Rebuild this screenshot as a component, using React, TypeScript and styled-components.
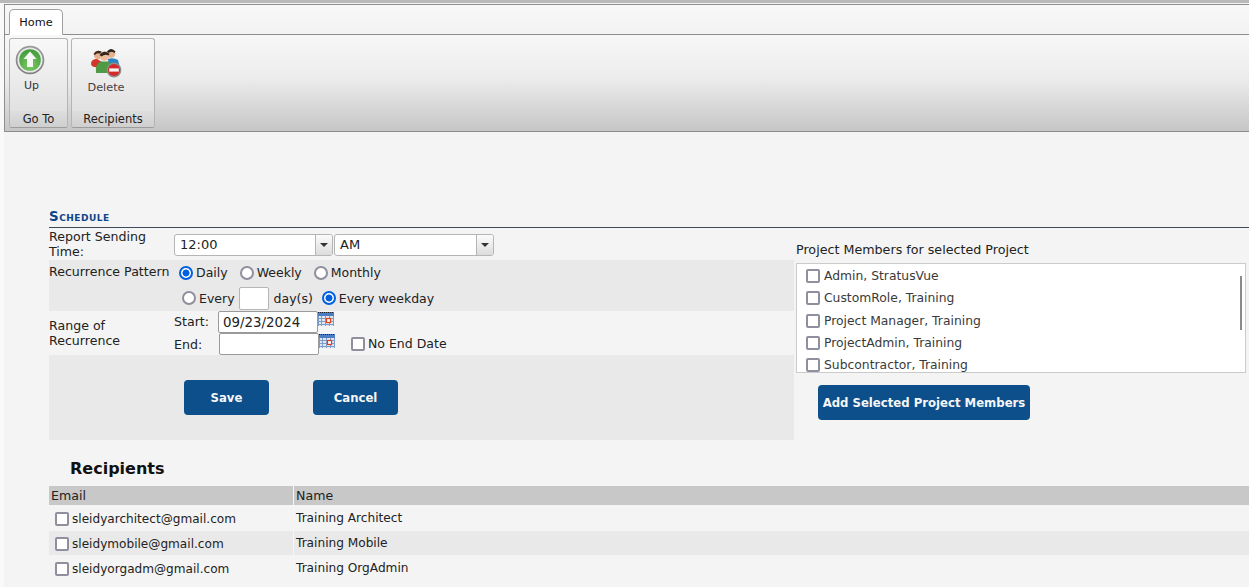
import React from "react";
import styled, { createGlobalStyle } from "styled-components";

const Global = createGlobalStyle`
  html, body { margin: 0; padding: 0; background: #f4f4f4; }
  body { font-family: "DejaVu Sans", Verdana, sans-serif; font-size: 12.6px; color: #222; overflow: hidden; }
`;

const Page = styled.div`
  width: 1249px;
  height: 587px;
  overflow: hidden;
  border-top: 3px solid #b9b9b9;
  box-sizing: border-box;
  padding-left: 4px;
  background: linear-gradient(to right, #f9f9f9 4px, #f4f4f4 4px);
`;

const Ribbon = styled.header`
  margin-top: 1px;
  border: 1px solid #8e8e8e;
  border-right: none;
  height: 128px;
  box-sizing: border-box;
  background: #fff;
`;

const TabStrip = styled.div`
  height: 30px;
  box-sizing: border-box;
  padding: 4px 0 0 4px;
  border-bottom: 1px solid #8e8e8e;
  background: linear-gradient(#f8f8f8, #f2f2f2);
  display: flex;
  align-items: flex-end;
`;

const Tab = styled.div`
  width: 54px;
  height: 26px;
  box-sizing: border-box;
  margin-bottom: -1px;
  padding-top: 1px;
  border: 1px solid #a0a0a0;
  border-bottom: 1px solid #fff;
  border-radius: 5px 5px 0 0;
  background: #fff;
  color: #111;
  font-size: 11.3px;
  display: flex;
  align-items: center;
  justify-content: center;
`;

const RibbonBody = styled.div`
  height: 96px;
  box-sizing: border-box;
  padding: 3px 0 0 4px;
  display: flex;
  gap: 3px;
  background: linear-gradient(#f7f7f7 0%, #ececec 45%, #c6c6c6 100%);
`;

const Group = styled.div<{ $w: number }>`
  width: ${(p) => p.$w}px;
  height: 90px;
  box-sizing: border-box;
  border: 1px solid #b4b4b4;
  border-bottom-color: #9c9c9c;
  border-radius: 3px;
  display: flex;
  flex-direction: column;
  background: linear-gradient(#f8f8f8, #dcdcdc);
`;

const GroupBody = styled.div`
  flex: 1;
`;

const GroupFooter = styled.div`
  height: 16px;
  background: linear-gradient(#dedede, #cfcfcf);
  color: #222;
  font-size: 11.5px;
  line-height: 16px;
  text-align: center;
  border-radius: 0 0 3px 3px;
`;

const ActionUp = styled.div`
  display: flex;
  flex-direction: column;
  align-items: flex-start;
  padding: 6px 0 0 5px;
  color: #333;
  font-size: 11px;
  svg { display: block; }
  span { margin: 4px 0 0 9px; }
`;

const ActionDelete = styled.div`
  display: flex;
  flex-direction: column;
  align-items: center;
  padding-top: 7px;
  color: #4a3f3f;
  font-size: 11.3px;
  width: 68px;
  svg { display: block; }
  span { margin-top: 3px; }
`;

const Content = styled.main`
  padding: 78px 0 0 45px;
`;

const SectionTitle = styled.h2`
  margin: 0;
  height: 17px;
  line-height: 14px;
  color: #0c4488;
  font-size: 13.4px;
  font-weight: bold;
  font-variant: small-caps;
  letter-spacing: 0.5px;
  border-bottom: 1px solid #3c4a5a;
`;

const Columns = styled.div`
  display: flex;
  align-items: flex-start;
`;

const FormPanel = styled.section`
  width: 745px;
  flex: none;
`;

const FormRow = styled.div<{ $h: number; $shade?: boolean }>`
  height: ${(p) => p.$h}px;
  box-sizing: border-box;
  display: flex;
  background: ${(p) => (p.$shade ? "#e9e9e9" : "transparent")};
`;

const RowLabel = styled.div<{ $top: number }>`
  width: 125px;
  flex: none;
  line-height: 15px;
  padding-top: ${(p) => p.$top}px;
  color: #222;
`;

const SelectBox = styled.div<{ $w: number }>`
  width: ${(p) => p.$w}px;
  height: 22px;
  box-sizing: border-box;
  border: 1px solid #b5b5b5;
  border-radius: 3px;
  background: #fff;
  display: flex;
  align-items: stretch;
  color: #222;
  font-size: 13px;
  line-height: 20px;
  overflow: hidden;
`;

const SelectText = styled.span`
  flex: 1;
  padding-left: 5px;
`;

const SelectArrow = styled.span`
  width: 16px;
  border-left: 1px solid #b5b5b5;
  background: linear-gradient(#fbfbfb, #dcdcdc);
  display: flex;
  align-items: center;
  justify-content: center;
  &::after {
    content: "";
    border-left: 4px solid transparent;
    border-right: 4px solid transparent;
    border-top: 4px solid #333;
  }
`;

const SelectsLine = styled.div`
  display: flex;
  gap: 1px;
  padding-top: 6px;
`;

const PatternStack = styled.div`
  display: flex;
  flex-direction: column;
`;

const OptionsLine = styled.div<{ $h: number; $left: number; $gap: number }>`
  height: ${(p) => p.$h}px;
  padding-left: ${(p) => p.$left}px;
  display: flex;
  align-items: center;
  gap: ${(p) => p.$gap}px;
`;

const Choice = styled.label`
  display: flex;
  align-items: center;
  gap: 3px;
  color: #222;
  font-size: 12.5px;
`;

const Radio = styled.input.attrs({ type: "radio" })`
  appearance: none;
  margin: 0;
  width: 14px;
  height: 14px;
  box-sizing: border-box;
  border-radius: 50%;
  border: 2px solid #8f8f9d;
  background: #fff;
  &:checked {
    border-color: #0060df;
    background: radial-gradient(circle, #0060df 0 3.2px, #fff 3.8px);
  }
`;

const Check = styled.input.attrs({ type: "checkbox" })`
  appearance: none;
  margin: 0;
  flex: none;
  width: 14px;
  height: 14px;
  box-sizing: border-box;
  border-radius: 2px;
  border: 2px solid #8f8f9d;
  background: #fff;
`;

const DaysInput = styled.input`
  width: 30px;
  height: 23px;
  box-sizing: border-box;
  margin: 0 5px 0 4px;
  border: 1px solid #b5b5b5;
  border-radius: 2px;
  background: #fff;
`;

const EveryGroup = styled.div`
  display: flex;
  align-items: center;
  color: #222;
  font-size: 12.5px;
`;

const DateStack = styled.div`
  display: flex;
  flex-direction: column;
`;

const DateLine = styled.div`
  height: 22px;
  display: flex;
  align-items: flex-start;
`;

const DateLabel = styled.span<{ $w: number; $top?: number }>`
  width: ${(p) => p.$w}px;
  line-height: 22px;
  padding-top: ${(p) => p.$top ?? 0}px;
  color: #222;
`;

const DateInput = styled.input`
  width: 100px;
  height: 22px;
  box-sizing: border-box;
  padding: 0 4px;
  border: 1px solid #9a9a9a;
  border-radius: 2px;
  background: #fff;
  font: 13.4px "DejaVu Sans", Verdana, sans-serif;
  color: #222;
`;

const NoEnd = styled.label`
  display: flex;
  align-items: center;
  gap: 3px;
  margin: 3px 0 0 16px;
  line-height: 16px;
  color: #222;
  font-size: 12.5px;
`;

const ButtonsRow = styled.div`
  display: flex;
  gap: 44px;
  padding: 25px 0 0 135px;
`;

const PrimaryButton = styled.button<{ $w: number }>`
  width: ${(p) => p.$w}px;
  height: 35px;
  padding: 0;
  border: none;
  border-radius: 4px;
  background: #0c4f8a;
  color: #f6f6f6;
  font: bold 11.7px "DejaVu Sans", Verdana, sans-serif;
  white-space: nowrap;
`;

const MembersPanel = styled.aside`
  margin-left: 2px;
  width: 450px;
  flex: none;
`;

const MembersTitle = styled.div`
  height: 35px;
  line-height: 44px;
  color: #222;
  font-size: 12.7px;
`;

const MembersList = styled.div`
  position: relative;
  height: 110px;
  box-sizing: border-box;
  border: 1px solid #cbcbcb;
  background: #fff;
  overflow: hidden;
  padding: 1px 0 0 9px;
`;

const MemberRow = styled.label`
  height: 22.3px;
  display: flex;
  align-items: center;
  gap: 4px;
  color: #3a3a3a;
  font-size: 12.35px;
`;

const ScrollThumb = styled.div`
  position: absolute;
  right: 3px;
  top: 12px;
  width: 2px;
  height: 54px;
  background: #8a8a8a;
`;

const AddButton = styled(PrimaryButton)`
  display: block;
  margin: 12px 0 0 22px;
`;

const RecipientsTitle = styled.h3`
  margin: 0;
  padding: 19px 0 0 21px;
  height: 46px;
  box-sizing: border-box;
  line-height: 20px;
  font-size: 16px;
  font-weight: bold;
  color: #111;
`;

const TableRow = styled.div<{ $h: number; $bg: string; $gap: number }>`
  height: ${(p) => p.$h}px;
  display: flex;
  background: ${(p) => p.$bg};
  margin-bottom: ${(p) => p.$gap}px;
`;

const EmailCell = styled.div<{ $head?: boolean }>`
  width: 245px;
  flex: none;
  box-sizing: border-box;
  display: flex;
  align-items: center;
  gap: 3px;
  padding: ${(p) => (p.$head ? "0 0 0 2px" : "2px 0 0 6px")};
  border-right: 1px solid #f6f6f6;
  color: #222;
  font-size: ${(p) => (p.$head ? "12.6px" : "12.1px")};
`;

const NameCell = styled.div<{ $head?: boolean }>`
  flex: 1;
  padding-left: 2px;
  display: flex;
  align-items: center;
  color: #222;
  font-size: ${(p) => (p.$head ? "12.6px" : "12.15px")};
`;

const UpIcon = () => (
  <svg width="30" height="30" viewBox="0 0 30 30" aria-hidden="true">
    <defs>
      <linearGradient id="ring" x1="0" y1="0" x2="0" y2="1">
        <stop offset="0" stopColor="#9a9a9a" />
        <stop offset="1" stopColor="#7d7d7d" />
      </linearGradient>
      <radialGradient id="green" cx="0.5" cy="0.75" r="0.75">
        <stop offset="0" stopColor="#7ccb62" />
        <stop offset="1" stopColor="#3f9a3a" />
      </radialGradient>
    </defs>
    <circle cx="15" cy="15" r="14.3" fill="url(#ring)" />
    <circle cx="15" cy="15" r="12.6" fill="#e8e8e8" />
    <circle cx="15" cy="15" r="10.8" fill="url(#green)" />
    <path d="M15 6.5 L21.5 14 H18 V22 H12 V14 H8.5 Z" fill="#f7f7f7" />
  </svg>
);

const DeleteIcon = () => (
  <svg width="32" height="32" viewBox="0 0 32 32" aria-hidden="true">
    <circle cx="8" cy="9" r="4.2" fill="#e5b08e" />
    <path d="M3.5 8 Q7 2.5 12 6 L11 8 Q7 6 5 9 Z" fill="#3a2a20" />
    <path d="M1 18 Q1 13 7 13 L12 16 L9 21 Q2 22 1 18 Z" fill="#d3362b" />
    <circle cx="21" cy="7.5" r="4.3" fill="#e5b08e" />
    <path d="M17 5.5 Q21 0.5 25.5 5.5 L24.5 7 Q21 4.5 18 7.5 Z" fill="#2c2320" />
    <path d="M18 13 Q23 11 28 14 L30 22 H19 Z" fill="#2a86c4" />
    <circle cx="14.5" cy="10" r="4.8" fill="#eebc99" />
    <path d="M9.5 9 Q14 3 19.5 8 L18.5 9.5 Q15 7.5 11.5 10.5 Z" fill="#33261e" />
    <path d="M6 27 Q5 18 10.5 15.5 L18.5 15.5 Q23 19 21 27 Z" fill="#4f9a45" />
    <circle cx="24" cy="24" r="7.4" fill="#8d8d8d" />
    <circle cx="24" cy="24" r="6" fill="#d42a2a" />
    <rect x="19.2" y="22.4" width="9.6" height="3.2" fill="#f4f4f4" />
  </svg>
);

const CalendarIcon = () => (
  <svg width="16" height="16" viewBox="0 0 16 16" aria-hidden="true" style={{ flex: "none" }}>
    <rect x="0" y="1" width="16" height="14" fill="#dfe7f3" />
    <rect x="0" y="1" width="16" height="4" fill="#4c7cc4" />
    <path d="M0 1.5 H16" stroke="#222" strokeWidth="1" strokeDasharray="1 1" />
    <path d="M0 7.5 H16 M0 10.5 H16 M0 13.5 H16 M3.5 5 V15 M7.5 5 V15 M11.5 5 V15 M15.5 5 V15 M0.5 5 V15" stroke="#7d9bcb" strokeWidth="1" />
    <rect x="8.5" y="7.5" width="4" height="4" fill="#fff" stroke="#e2401c" strokeWidth="1.2" />
  </svg>
);

const members = [
  "Admin, StratusVue",
  "CustomRole, Training",
  "Project Manager, Training",
  "ProjectAdmin, Training",
  "Subcontractor, Training",
];

const recipients = [
  { email: "sleidyarchitect@gmail.com", name: "Training Architect", bg: "#f4f4f4", h: 25 },
  { email: "sleidymobile@gmail.com", name: "Training Mobile", bg: "#e9e9e9", h: 24 },
  { email: "sleidyorgadm@gmail.com", name: "Training OrgAdmin", bg: "#f4f4f4", h: 24 },
];

export default function App() {
  return (
    <Page>
      <Global />
      <Ribbon>
        <TabStrip>
          <Tab>Home</Tab>
        </TabStrip>
        <RibbonBody>
          <Group $w={59}>
            <GroupBody>
              <ActionUp>
                <UpIcon />
                <span>Up</span>
              </ActionUp>
            </GroupBody>
            <GroupFooter>Go To</GroupFooter>
          </Group>
          <Group $w={84}>
            <GroupBody>
              <ActionDelete>
                <DeleteIcon />
                <span>Delete</span>
              </ActionDelete>
            </GroupBody>
            <GroupFooter>Recipients</GroupFooter>
          </Group>
        </RibbonBody>
      </Ribbon>
      <Content>
        <SectionTitle>Schedule</SectionTitle>
        <Columns>
          <FormPanel>
            <FormRow $h={32}>
              <RowLabel $top={1}>Report Sending Time:</RowLabel>
              <SelectsLine>
                <SelectBox $w={159}>
                  <SelectText>12:00</SelectText>
                  <SelectArrow />
                </SelectBox>
                <SelectBox $w={160}>
                  <SelectText>AM</SelectText>
                  <SelectArrow />
                </SelectBox>
              </SelectsLine>
            </FormRow>
            <FormRow $h={51} $shade>
              <RowLabel $top={4}>Recurrence Pattern</RowLabel>
              <PatternStack>
                <OptionsLine $h={25} $left={5} $gap={12}>
                  <Choice><Radio name="p" defaultChecked />Daily</Choice>
                  <Choice><Radio name="p" />Weekly</Choice>
                  <Choice><Radio name="p" />Monthly</Choice>
                </OptionsLine>
                <OptionsLine $h={26} $left={8} $gap={9}>
                  <EveryGroup>
                    <Choice><Radio name="r" />Every</Choice>
                    <DaysInput />
                    day(s)
                  </EveryGroup>
                  <Choice><Radio name="r" defaultChecked />Every weekday</Choice>
                </OptionsLine>
              </PatternStack>
            </FormRow>
            <FormRow $h={44}>
              <RowLabel $top={7}>Range of Recurrence</RowLabel>
              <DateStack>
                <DateLine>
                  <DateLabel $w={44}>Start:</DateLabel>
                  <DateInput defaultValue="09/23/2024" />
                  <CalendarIcon />
                </DateLine>
                <DateLine>
                  <DateLabel $w={45} $top={1}>End:</DateLabel>
                  <DateInput />
                  <CalendarIcon />
                  <NoEnd><Check />No End Date</NoEnd>
                </DateLine>
              </DateStack>
            </FormRow>
            <FormRow $h={85} $shade>
              <ButtonsRow>
                <PrimaryButton $w={85}>Save</PrimaryButton>
                <PrimaryButton $w={85}>Cancel</PrimaryButton>
              </ButtonsRow>
            </FormRow>
          </FormPanel>
          <MembersPanel>
            <MembersTitle>Project Members for selected Project</MembersTitle>
            <MembersList>
              {members.map((m) => (
                <MemberRow key={m}><Check />{m}</MemberRow>
              ))}
              <ScrollThumb />
            </MembersList>
            <AddButton $w={212}>Add Selected Project Members</AddButton>
          </MembersPanel>
        </Columns>
        <RecipientsTitle>Recipients</RecipientsTitle>
        <TableRow $h={19} $bg="#c8c8c8" $gap={0}>
          <EmailCell $head>Email</EmailCell>
          <NameCell $head>Name</NameCell>
        </TableRow>
        {recipients.map((r) => (
          <TableRow key={r.email} $h={r.h} $bg={r.bg} $gap={1}>
            <EmailCell><Check />{r.email}</EmailCell>
            <NameCell>{r.name}</NameCell>
          </TableRow>
        ))}
      </Content>
    </Page>
  );
}
